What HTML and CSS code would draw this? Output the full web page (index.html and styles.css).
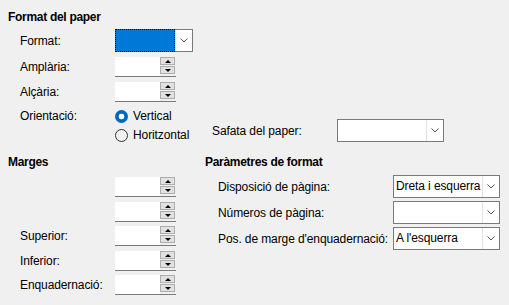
FILE: index.html
```html
<!DOCTYPE html>
<html lang="ca">
<head>
    <meta charset="UTF-8">
    <title>Format del paper</title>
    <link rel="stylesheet" href="styles.css">
</head>
<body>
    <div class="page">
        <section class="paper">
            <h2 class="title">Format del paper</h2>
            <div class="rows">
                <div class="row row-combo">
                    <span class="label">Format:</span>
                    <div class="combo combo-format focused">
                        <span class="value"></span>
                        <span class="drop"><svg width="8" height="5" viewBox="0 0 8 5"><path d="M0.5 0.5L4 4L7.5 0.5" fill="none" stroke="#555" stroke-width="1"/></svg></span>
                    </div>
                </div>
                <div class="row row-spin">
                    <span class="label">Amplària:</span>
                    <div class="spin">
                        <span class="field"></span>
                        <span class="btns"><span class="btn up"></span><span class="btn down"></span></span>
                    </div>
                </div>
                <div class="row row-spin">
                    <span class="label">Alçària:</span>
                    <div class="spin">
                        <span class="field"></span>
                        <span class="btns"><span class="btn up"></span><span class="btn down"></span></span>
                    </div>
                </div>
                <div class="row row-orient">
                    <span class="label">Orientació:</span>
                    <div class="radios">
                        <label class="radio"><span class="dot checked"></span>Vertical</label>
                        <label class="radio"><span class="dot"></span>Horitzontal</label>
                    </div>
                    <div class="tray">
                        <span class="tray-label">Safata del paper:</span>
                        <div class="combo combo-tray">
                            <span class="value"></span>
                            <span class="drop"><svg width="8" height="5" viewBox="0 0 8 5"><path d="M0.5 0.5L4 4L7.5 0.5" fill="none" stroke="#555" stroke-width="1"/></svg></span>
                        </div>
                    </div>
                </div>
            </div>
        </section>

        <div class="bottom">
            <section class="margins">
                <h2 class="title">Marges</h2>
                <div class="margin-rows">
                    <div class="row row-spin">
                        <span class="label"></span>
                        <div class="spin"><span class="field"></span><span class="btns"><span class="btn up"></span><span class="btn down"></span></span></div>
                    </div>
                    <div class="row row-spin">
                        <span class="label"></span>
                        <div class="spin"><span class="field"></span><span class="btns"><span class="btn up"></span><span class="btn down"></span></span></div>
                    </div>
                    <div class="row row-spin">
                        <span class="label">Superior:</span>
                        <div class="spin"><span class="field"></span><span class="btns"><span class="btn up"></span><span class="btn down"></span></span></div>
                    </div>
                    <div class="row row-spin">
                        <span class="label">Inferior:</span>
                        <div class="spin"><span class="field"></span><span class="btns"><span class="btn up"></span><span class="btn down"></span></span></div>
                    </div>
                    <div class="row row-spin">
                        <span class="label">Enquadernació:</span>
                        <div class="spin"><span class="field"></span><span class="btns"><span class="btn up"></span><span class="btn down"></span></span></div>
                    </div>
                </div>
            </section>

            <section class="settings">
                <h2 class="title">Paràmetres de format</h2>
                <div class="setting-rows">
                    <div class="row row-combo">
                        <span class="label wide">Disposició de pàgina:</span>
                        <div class="combo combo-wide">
                            <span class="value">Dreta i esquerra</span>
                            <span class="drop"><svg width="8" height="5" viewBox="0 0 8 5"><path d="M0.5 0.5L4 4L7.5 0.5" fill="none" stroke="#555" stroke-width="1"/></svg></span>
                        </div>
                    </div>
                    <div class="row row-combo">
                        <span class="label wide">Números de pàgina:</span>
                        <div class="combo combo-wide">
                            <span class="value"></span>
                            <span class="drop"><svg width="8" height="5" viewBox="0 0 8 5"><path d="M0.5 0.5L4 4L7.5 0.5" fill="none" stroke="#555" stroke-width="1"/></svg></span>
                        </div>
                    </div>
                    <div class="row row-combo">
                        <span class="label wide">Pos. de marge d'enquadernació:</span>
                        <div class="combo combo-wide">
                            <span class="value">A l'esquerra</span>
                            <span class="drop"><svg width="8" height="5" viewBox="0 0 8 5"><path d="M0.5 0.5L4 4L7.5 0.5" fill="none" stroke="#555" stroke-width="1"/></svg></span>
                        </div>
                    </div>
                </div>
            </section>
        </div>
    </div>
</body>
</html>
```

FILE: styles.css
```css
* {
    margin: 0;
    padding: 0;
    box-sizing: border-box;
}

body {
    background: #f0f0f0;
    color: #000;
    font-family: "Liberation Sans", Arial, sans-serif;
    font-size: 12px;
    line-height: 16px;
    letter-spacing: -0.1px;
}

.page {
    padding: 8px 0 0 8px;
}

.title {
    font-size: 12px;
    font-weight: bold;
    line-height: 18px;
    height: 18px;
    letter-spacing: -0.3px;
}

/* Format del paper */
.rows {
    padding-left: 12px;
    margin-top: 3px;
    display: flex;
    flex-direction: column;
    gap: 5px;
}

.row {
    display: flex;
    align-items: center;
}

.label {
    width: 95px;
    flex: none;
}

.label.wide {
    width: 175px;
}

.row-combo {
    height: 23px;
}

.row-spin {
    height: 20px;
}

/* combobox */
.combo {
    display: flex;
    height: 23px;
    background: #fff;
    border: 1px solid #7a7a7a;
}

.combo .value {
    flex: 1;
    padding-left: 2px;
    line-height: 21px;
    white-space: nowrap;
    overflow: hidden;
}

.combo .drop {
    width: 17px;
    flex: none;
    display: flex;
    align-items: center;
    justify-content: center;
    border-left: 1px solid #e3e3e3;
    background: #fff;
}

.combo-format {
    width: 78px;
}

.combo-format.focused .value {
    background: #0078d7;
    border: 1px dotted #000;
    margin: -1px 0 -1px -1px;
}

.combo-tray {
    width: 107px;
}

.combo-wide {
    width: 107px;
}

/* spin field */
.spin {
    display: flex;
    width: 61px;
    height: 20px;
    border-bottom: 1px solid #7a7a7a;
}

.spin .field {
    width: 45px;
    background: #fff;
}

.spin .btns {
    width: 16px;
    display: flex;
    flex-direction: column;
    gap: 1px;
    padding: 0 1px 1px 0;
}

.spin .btn {
    height: 8px;
    background: #e1e1e1;
    border: 1px solid #adadad;
    position: relative;
}

.spin .btn::after {
    content: "";
    position: absolute;
    left: 4px;
    top: 2px;
    border-left: 3px solid transparent;
    border-right: 3px solid transparent;
}

.spin .up::after {
    border-bottom: 3px solid #000;
}

.spin .down::after {
    border-top: 3px solid #000;
}

/* orientation */
.row-orient {
    align-items: flex-start;
}

.row-orient .label {
    line-height: 18px;
}

.radios {
    width: 97px;
    display: flex;
    flex-direction: column;
    gap: 1px;
}

.radio {
    display: flex;
    align-items: center;
    height: 18px;
    white-space: nowrap;
}

.dot {
    width: 13px;
    height: 13px;
    border-radius: 50%;
    border: 1px solid #333;
    margin-right: 5px;
    flex: none;
}

.dot.checked {
    border: none;
    background: radial-gradient(circle, #fff 0 2.6px, #0067c0 3.2px);
}

.tray {
    display: flex;
    align-items: center;
    margin-top: 12px;
}

.tray-label {
    width: 125px;
}

/* bottom part */
.bottom {
    display: flex;
    margin-top: 9px;
}

.margins {
    width: 197px;
}

.margin-rows {
    padding-left: 12px;
    margin-top: 6px;
    display: flex;
    flex-direction: column;
    gap: 4.5px;
}

.setting-rows {
    padding-left: 13px;
    margin-top: 4px;
    display: flex;
    flex-direction: column;
    gap: 3px;
}
```
